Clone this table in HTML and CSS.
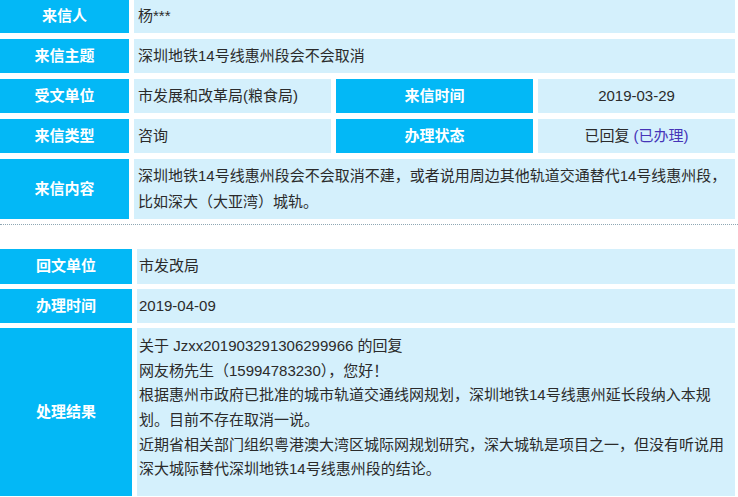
FILE: index.html
```html
<!DOCTYPE html>
<html lang="zh-CN">
<head>
<meta charset="utf-8">
<title>来信详情</title>
<link rel="stylesheet" href="styles.css">
</head>
<body>
<div class="page">
  <div class="grid letter">
    <div class="label">来信人</div>
    <div class="value span3">杨***</div>

    <div class="label">来信主题</div>
    <div class="value span3">深圳地铁14号线惠州段会不会取消</div>

    <div class="label">受文单位</div>
    <div class="value">市发展和改革局(粮食局)</div>
    <div class="label">来信时间</div>
    <div class="value center">2019-03-29</div>

    <div class="label">来信类型</div>
    <div class="value">咨询</div>
    <div class="label">办理状态</div>
    <div class="value center">已回复 <span class="state">(已办理)</span></div>

    <div class="label">来信内容</div>
    <div class="value span3">深圳地铁14号线惠州段会不会取消不建，或者说用周边其他轨道交通替代14号线惠州段，比如深大（大亚湾）城轨。</div>
  </div>

  <div class="divider"></div>

  <div class="grid reply">
    <div class="label">回文单位</div>
    <div class="value">市发改局</div>

    <div class="label">办理时间</div>
    <div class="value">2019-04-09</div>

    <div class="label">处理结果</div>
    <div class="value result">
      <p>关于 Jzxx201903291306299966 的回复</p>
      <p>网友杨先生（15994783230），您好！</p>
      <p>根据惠州市政府已批准的城市轨道交通线网规划，深圳地铁14号线惠州延长段纳入本规划。目前不存在取消一说。</p>
      <p>近期省相关部门组织粤港澳大湾区城际网规划研究，深大城轨是项目之一，但没有听说用深大城际替代深圳地铁14号线惠州段的结论。</p>
    </div>
  </div>
</div>
</body>
</html>
```

FILE: styles.css
```css
html, body {
  margin: 0;
  padding: 0;
  background: #ffffff;
}

body {
  font-family: "Liberation Sans", "Noto Sans CJK SC", sans-serif;
  font-size: 15px;
  color: #2b2b2b;
  overflow: hidden;
}

.page {
  width: 735px;
  margin-top: -1px;
}

.grid {
  display: grid;
}

.letter {
  grid-template-columns: 129px 197px 197px 197px;
  gap: 6px 5px;
  line-height: 26px;
}

.reply {
  grid-template-columns: 132px 1fr;
  gap: 5px 5px;
  line-height: 24.6px;
}

.label {
  background: #03b8f6;
  color: #ffffff;
  font-weight: bold;
  display: flex;
  align-items: center;
  justify-content: center;
}

.value {
  background: #d4f0fc;
}

.letter .label {
  padding: 4px 0;
}

.letter .value {
  padding: 4px 3px 4px 4px;
}

.reply .label {
  padding: 5px 0;
}

.reply .value {
  padding: 5px 10px 5px 2px;
}

.reply .result {
  padding: 6px 10px 14px 2px;
}

.span3 {
  grid-column: span 3;
}

.letter .center {
  text-align: center;
  padding: 4px 0;
}

.state {
  color: #4634b8;
}

.divider {
  margin: 5px 0 24px;
  width: 738px;
  border-top: 1px dotted #8fa7b3;
}

.value p {
  margin: 0;
}
```
